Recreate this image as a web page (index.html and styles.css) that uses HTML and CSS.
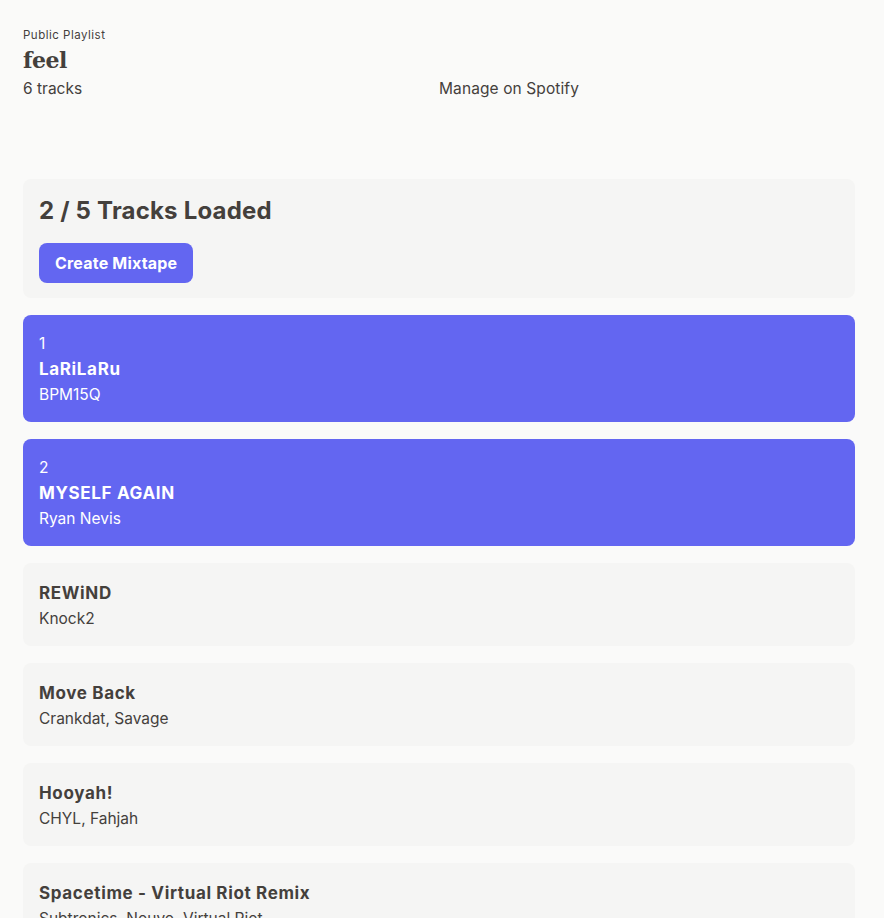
FILE: index.html
```html
<!DOCTYPE html>
<html>
<head>
<meta charset="utf-8">
<link rel="stylesheet" href="styles.css">
</head>
<body>
<main class="page">
  <header class="header">
    <div class="info">
      <div class="kind">Public Playlist</div>
      <h1 class="title">feel</h1>
      <div class="count">6 tracks</div>
    </div>
    <div class="manage">Manage on Spotify</div>
  </header>

  <section class="status card">
    <h2 class="status-title">2 / 5 Tracks Loaded</h2>
    <button class="btn">Create Mixtape</button>
  </section>

  <ul class="tracks">
    <li class="track card selected">
      <div class="num">1</div>
      <div class="name">LaRiLaRu</div>
      <div class="artist">BPM15Q</div>
    </li>
    <li class="track card selected">
      <div class="num">2</div>
      <div class="name">MYSELF AGAIN</div>
      <div class="artist">Ryan Nevis</div>
    </li>
    <li class="track card">
      <div class="name">REWiND</div>
      <div class="artist">Knock2</div>
    </li>
    <li class="track card">
      <div class="name">Move Back</div>
      <div class="artist">Crankdat, Savage</div>
    </li>
    <li class="track card">
      <div class="name">Hooyah!</div>
      <div class="artist">CHYL, Fahjah</div>
    </li>
    <li class="track card">
      <div class="name">Spacetime - Virtual Riot Remix</div>
      <div class="artist">Subtronics, Nouvo, Virtual Riot</div>
    </li>
  </ul>
</main>
</body>
</html>
```
FILE: styles.css
```css
* { box-sizing: border-box; }
html, body { margin: 0; padding: 0; }
body {
  background: #fafaf9;
  color: #44403c;
  font-family: "Inter", "Roboto", sans-serif;
  font-size: 15.5px;
}
.page {
  width: 832px;
  margin-left: 23px;
  padding-top: 27px;
}
.header {
  display: grid;
  grid-template-columns: 1fr 1fr;
  align-items: end;
  margin-bottom: 78px;
}
.kind {
  font-size: 11.5px;
  line-height: 16px;
  letter-spacing: 0.5px;
}
.title {
  margin: 0;
  font-family: "DejaVu Serif", "Liberation Serif", serif;
  font-weight: 700;
  font-size: 22px;
  line-height: 34px;
  letter-spacing: -0.5px;
}
.count, .manage {
  font-size: 15.5px;
  line-height: 24px;
}
.manage { letter-spacing: 0.1px; }
.card {
  background: #f5f5f4;
  border-radius: 8px;
  padding: 16px;
}
.status { margin-bottom: 17px; padding-bottom: 15px; }
.status-title {
  margin: 0 0 16px;
  font-size: 24px;
  font-weight: 700;
  line-height: 32px;
  letter-spacing: 0.2px;
}
.btn {
  background: #6366f1;
  color: #fff;
  border: 0;
  border-radius: 8px;
  font-family: inherit;
  font-weight: 700;
  font-size: 16px;
  letter-spacing: 0.2px;
  height: 40px;
  padding: 0 16px;
}
.tracks {
  list-style: none;
  margin: 0;
  padding: 0;
  display: flex;
  flex-direction: column;
  gap: 17px;
}
.track { line-height: 24px; padding-top: 17px; padding-bottom: 15px; }
.track.selected { background: #6366f1; color: #fff; }
.num { font-size: 15.5px; }
.name { font-weight: 700; font-size: 17px; letter-spacing: 0.65px; line-height: 27px; }
.artist { font-size: 15.5px; }
```
